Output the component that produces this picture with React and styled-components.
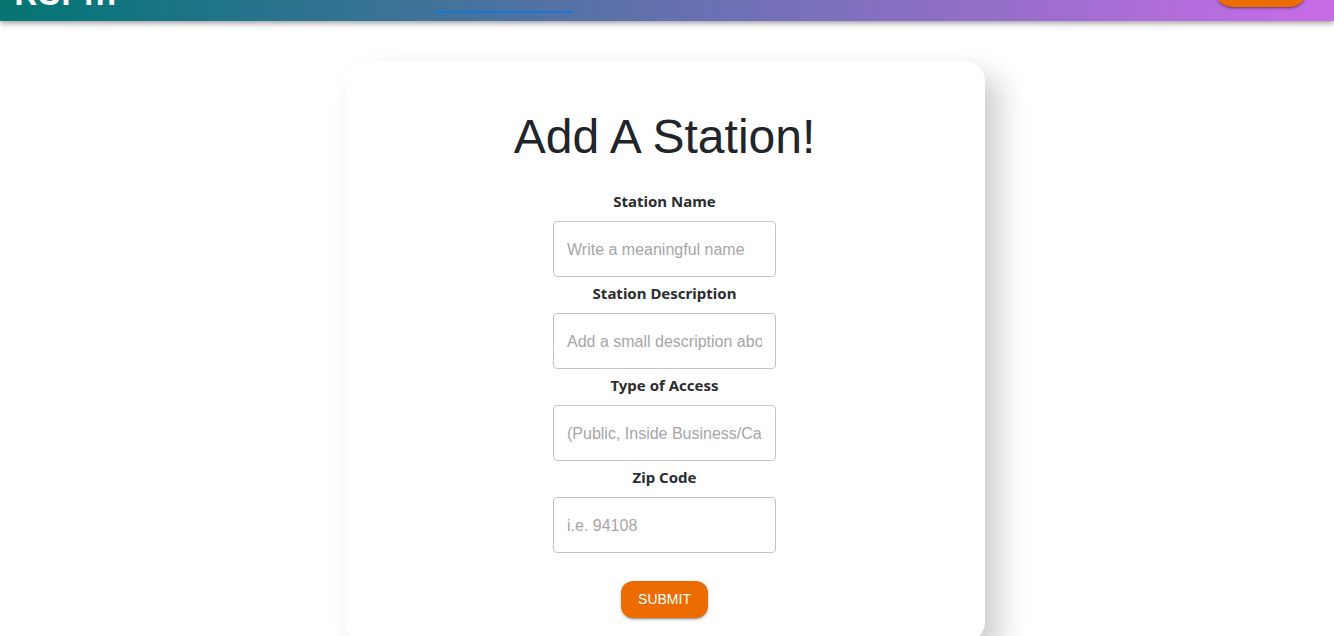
import React from "react";
import styled, { createGlobalStyle } from "styled-components";

const GlobalStyle = createGlobalStyle`
  *, *::before, *::after { box-sizing: border-box; }
  html, body { margin: 0; background: #fff; }
  body {
    color: #212529;
    font-family: "Liberation Sans", Arial, sans-serif;
    font-size: 16px;
  }
`;

const Page = styled.div`
  height: 100vh;
  overflow: hidden;
`;

const Header = styled.header`
  display: flex;
  align-items: flex-end;
  justify-content: space-between;
  height: 21px;
  padding: 0 26px 0 14px;
  background: linear-gradient(90deg, #09756f 0%, #09757a 5%, #c96ce8 100%);
  box-shadow: 0 2px 4px -1px rgba(0, 0, 0, 0.2), 0 4px 5px rgba(0, 0, 0, 0.14), 0 1px 10px rgba(0, 0, 0, 0.12);
`;

const HeaderClip = styled.div`
  display: flex;
  flex: 1;
  align-items: flex-end;
  height: 21px;
  overflow: hidden;
`;

const Logo = styled.a`
  width: 421px;
  padding-bottom: 11px;
  color: #fff;
  font-family: Inter, sans-serif;
  font-size: 36px;
  font-weight: 600;
  line-height: 36px;
  text-decoration: none;
`;

const TabIndicator = styled.span`
  width: 139px;
  height: 2px;
  margin-bottom: 8px;
  background: #1976d2;
`;

const Button = styled.button`
  flex-shrink: 0;
  width: ${({ $pill }) => ($pill ? "94px" : "87px")};
  height: 37px;
  margin-bottom: ${({ $pill }) => ($pill ? "14px" : "0")};
  padding: 0 0 2px;
  border: 0;
  border-radius: ${({ $pill }) => ($pill ? "20px" : "12px")};
  background: #ed6c02;
  color: #fff;
  font: 500 14px/24px "Liberation Sans", Arial, sans-serif;
  text-transform: uppercase;
  box-shadow: 0 3px 1px -2px rgba(0, 0, 0, 0.2), 0 2px 2px rgba(0, 0, 0, 0.14), 0 1px 5px rgba(0, 0, 0, 0.12);
`;

const Content = styled.div`
  padding: 40px 4px 40px 0;
`;

const Card = styled.main`
  width: 100%;
  max-width: 640px;
  margin: 0 auto;
  padding: 48px 25px 24px 24px;
  border-radius: 20px;
  background: #fff;
  box-shadow: 15px 15px 30px rgba(0, 0, 0, 0.2);
`;

const Title = styled.h1`
  margin: 0 0 20px;
  font-size: 48px;
  font-weight: 400;
  line-height: 56px;
  text-align: center;
`;

const Form = styled.form`
  display: flex;
  flex-direction: column;
  align-items: center;
`;

const Field = styled.div`
  display: flex;
  flex-direction: column;
  align-items: center;
  width: 223px;
`;

const Label = styled.label`
  height: 36px;
  color: #2b2d30;
  font-family: "Noto Sans", sans-serif;
  font-size: 15px;
  font-weight: 700;
  line-height: 32px;
`;

const Input = styled.input`
  width: 100%;
  height: 56px;
  padding: 2px 13px 0;
  border: 1px solid #c4c4c4;
  border-radius: 4px;
  background: #fff;
  color: #212529;
  font: 16px/24px "Liberation Sans", Arial, sans-serif;
  &::placeholder { color: #a6a6a6; opacity: 1; }
`;

const Actions = styled.div`
  padding-top: 28px;
`;

const fields = [
  { id: "name", label: "Station Name", hint: "Write a meaningful name" },
  { id: "description", label: "Station Description", hint: "Add a small description about the station" },
  { id: "access", label: "Type of Access", hint: "(Public, Inside Business/Cafe, etc.)" },
  { id: "zip", label: "Zip Code", hint: "i.e. 94108" },
];

export default function App() {
  return (
    <Page>
      <GlobalStyle />
      <Header>
        <HeaderClip>
          <Logo href="#">RSPm</Logo>
          <TabIndicator />
        </HeaderClip>
        <Button $pill type="button" aria-label="Account" />
      </Header>
      <Content>
        <Card>
          <Title>Add A Station!</Title>
          <Form>
            {fields.map(({ id, label, hint }) => (
              <Field key={id}>
                <Label htmlFor={id}>{label}</Label>
                <Input id={id} placeholder={hint} />
              </Field>
            ))}
            <Actions>
              <Button type="submit">Submit</Button>
            </Actions>
          </Form>
        </Card>
      </Content>
    </Page>
  );
}
